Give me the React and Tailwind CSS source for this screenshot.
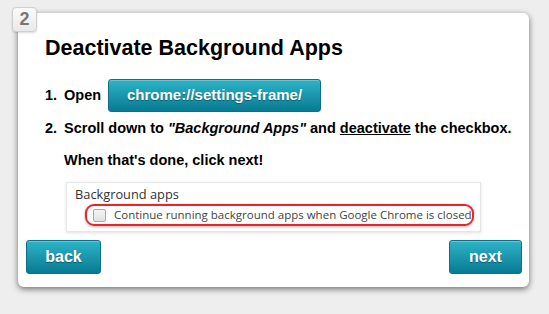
import React from 'react';

const tealBtn =
  'bg-gradient-to-b from-[#2db3c7] to-[#067b93] border border-[#0b7088] rounded-[3px] text-white font-bold [text-shadow:0_1px_1px_rgba(0,0,0,0.35)] shadow-[inset_0_1px_0_rgba(255,255,255,0.25)]';

const SettingsBox = () => (
  <div className="ml-[40px] w-[415px] h-[50px] border border-[#e6e6e6] bg-white shadow-[0_1px_3px_rgba(0,0,0,0.12)] pl-[8px] pt-[3px] font-['Open_Sans',sans-serif] text-[#333]">
    <div className="text-[12.8px] leading-[17px]">Background apps</div>
    <div className="ml-[10px] mt-[1px] w-[389px] h-[22px] rounded-[9px] border-2 border-[#e8252b] shadow-[0_1px_3px_rgba(0,0,0,0.3)] flex items-center pl-[6px]">
      <span className="w-[13px] h-[13px] rounded-[2px] border border-[#a8a8a8] bg-gradient-to-b from-[#f4f4f4] to-[#e2e2e2]" />
      <span className="ml-[8px] text-[11.5px] text-[#444] whitespace-nowrap">
        Continue running background apps when Google Chrome is closed
      </span>
    </div>
  </div>
);

const App = () => {
  return (
    <div className="w-[549px] h-[314px] bg-[#eeeeee] pt-[13px] pl-[18px] font-['Liberation_Sans',Arial,sans-serif] relative">
      <div className="w-[511px] h-[274px] bg-white rounded-[6px] shadow-[0_2px_6px_rgba(0,0,0,0.55)] pt-[23px] px-[8px]">
        <h1 className="ml-[19px] text-[21.5px] leading-[24px] font-bold text-black">Deactivate Background Apps</h1>

        <div className="ml-[19px] mt-[19px] flex items-center h-[33px] text-[14.5px] font-bold text-black">
          <span className="w-[19px]">1.</span>
          <span>Open</span>
          <button className={`${tealBtn} ml-[7px] w-[213px] h-[33px] text-[15px]`}>chrome://settings-frame/</button>
        </div>

        <div className="ml-[19px] mt-[7px] flex text-[14.5px] leading-[18px] font-bold text-black whitespace-nowrap">
          <span className="w-[19px]">2.</span>
          <span>
            Scroll down to <i>"Background Apps"</i> and <u>deactivate</u> the checkbox.
          </span>
        </div>

        <div className="ml-[38px] mt-[14px] text-[14.5px] leading-[18px] font-bold text-black">
          When that's done, click next!
        </div>

        <div className="mt-[13px]">
          <SettingsBox />
        </div>

        <div className="mt-[8px] flex justify-between">
          <button className={`${tealBtn} w-[75px] h-[34px] text-[16px]`}>back</button>
          <button className={`${tealBtn} w-[73px] h-[34px] text-[16px] mr-[-1px]`}>next</button>
        </div>
      </div>

      <div className="absolute left-[12px] top-[7px] w-[25px] h-[25px] rounded-[4px] border border-[#cfcfcf] bg-gradient-to-b from-[#fafafa] to-[#e9e9e9] flex items-center justify-center text-[18px] font-bold text-[#777] shadow-[0_1px_2px_rgba(0,0,0,0.15)]">
        2
      </div>
    </div>
  );
};

export default App;
